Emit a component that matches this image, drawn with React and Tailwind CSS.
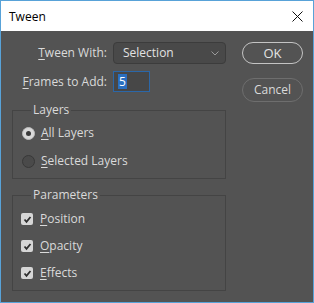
const Key = ({ children }) => <span className="underline underline-offset-2">{children}</span>;

const Radio = ({ checked, children }) => (
    <div className="flex items-center h-5">
        {checked ? (
            <span className="w-[13px] h-[13px] rounded-full bg-[#d9d9d9] border border-[#bdbdbd] flex items-center justify-center">
                <span className="w-[5px] h-[5px] rounded-full bg-[#3a3a3a]" />
            </span>
        ) : (
            <span className="w-[13px] h-[13px] rounded-full bg-[#4a4a4a] border border-[#383838]" />
        )}
        <span className="ml-[6px]">{children}</span>
    </div>
);

const Check = ({ children }) => (
    <div className="flex items-center h-5">
        <span className="w-[12px] h-[12px] rounded-[2px] bg-[#d6d6d6] flex items-center justify-center">
            <svg width="9" height="9" viewBox="0 0 9 9">
                <polyline points="1.5,4.5 3.5,6.8 7.5,2" fill="none" stroke="#2e2e2e" strokeWidth="1.8" />
            </svg>
        </span>
        <span className="ml-[7px]">{children}</span>
    </div>
);

const App = () => {
    return (
        <div className="w-[314px] h-[303px] border border-[#58a2d8] bg-[#535353] flex flex-col text-[12px] text-[#dadada]" style={{ fontFamily: '"Open Sans", "Noto Sans", sans-serif' }}>
            {/* Title bar */}
            <div className="h-[30px] bg-white flex items-center justify-between pl-[8px] pr-[10px] pt-[1px] text-black">
                <span className="text-[12px]">Tween</span>
                <svg width="11" height="11" viewBox="0 0 11 11">
                    <path d="M0.5 0.5 L10.5 10.5 M10.5 0.5 L0.5 10.5" stroke="#111" strokeWidth="1" />
                </svg>
            </div>

            <div className="flex pt-[11px] pl-[11px]">
                {/* Left column */}
                <div className="w-[214px]">
                    <div className="flex items-center h-[22px]">
                        <span className="w-[96px] text-right pr-[1px]"><Key>T</Key>ween With:</span>
                        <div className="ml-[5px] w-[113px] h-[22px] rounded-[4px] bg-[#494949] border border-[#3c3c3c] flex items-center justify-between pl-[9px] pr-[6px] text-[#e2e2e2]">
                            <span>Selection</span>
                            <svg width="8" height="5" viewBox="0 0 8 5">
                                <polyline points="0.5,0.5 4,4 7.5,0.5" fill="none" stroke="#9a9a9a" strokeWidth="1" />
                            </svg>
                        </div>
                    </div>

                    <div className="flex items-center h-[21px] mt-[7px]">
                        <span className="w-[96px] text-right pr-[1px]"><Key>F</Key>rames to Add:</span>
                        <div className="ml-[5px] w-[37px] h-[21px] bg-[#474747] border border-[#2b67a8] flex items-center pl-[4px]">
                            <span className="bg-[#2a6fc0] text-white px-[1px] leading-[15px]">5</span>
                        </div>
                    </div>

                    <fieldset className="mt-[10px] h-[77px] border border-[#444444] px-[9px]">
                        <legend className="ml-[9px] px-[2px] leading-4">Layers</legend>
                        <div className="flex flex-col gap-[8px] pt-[5px]">
                            <Radio checked><Key>A</Key>ll Layers</Radio>
                            <Radio><Key>S</Key>elected Layers</Radio>
                        </div>
                    </fieldset>

                    <fieldset className="mt-[8px] h-[104px] border border-[#444444] px-[8px]">
                        <legend className="ml-[10px] px-[2px] leading-4">Parameters</legend>
                        <div className="flex flex-col gap-[7px] pt-[6px]">
                            <Check><Key>P</Key>osition</Check>
                            <Check><Key>O</Key>pacity</Check>
                            <Check><Key>E</Key>ffects</Check>
                        </div>
                    </fieldset>
                </div>

                {/* Right column */}
                <div className="ml-[16px] flex flex-col">
                    <button className="w-[61px] h-[22px] rounded-full border border-[#c4c4c4] text-[#e4e4e4] text-[13px] leading-none">OK</button>
                    <button className="mt-[14px] w-[61px] h-[24px] rounded-full border border-[#6e6e6e] text-[#dadada] text-[12px] leading-none">Cancel</button>
                </div>
            </div>
        </div>
    );
};

export default App;
